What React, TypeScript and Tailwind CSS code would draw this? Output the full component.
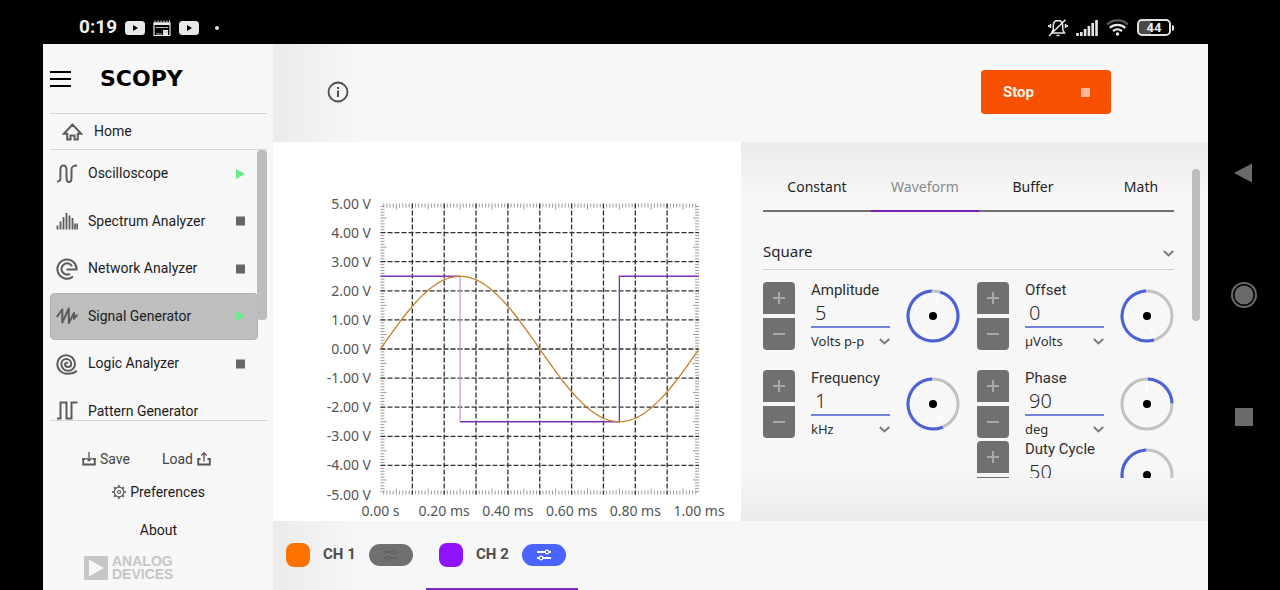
import React, { useState } from 'react';
import clsx from 'clsx';

type ToolState = 'running' | 'stopped' | 'none';

interface Tool {
  name: string;
  state: ToolState;
  icon: React.ReactNode;
}

const tools: Tool[] = [
  {
    name: 'Oscilloscope',
    state: 'running',
    icon: <path d="M1 18.500c3.200 0 3.400-1.200 3.400-4V7c0-3 .8-4.500 3-4.500S10.500 4 10.500 7v7.500c0 3 .8 4.500 2.500 4.500s2.500-1.500 2.500-4.500V7c0-3 1-4.500 5.500-4.500" />,
  },
  {
    name: 'Spectrum Analyzer',
    state: 'stopped',
    icon: <path d="M1.500 19.500v-4M4.500 19.500v-8M7.500 19.500V7M10.500 19.500V3M13.500 19.500V5.500M16.500 19.500V8M19 19.500v-6M21.300 19.500v-6" strokeWidth="1.800" />,
  },
  {
    name: 'Network Analyzer',
    state: 'stopped',
    icon: <path d="M17 18.600A9.600 9.600 0 1 1 20.600 11.500H10.500M14 15.800A5.600 5.600 0 1 1 16 8.200" />,
  },
  {
    name: 'Signal Generator',
    state: 'running',
    icon: <path d="M.8 12 6.300 4.500V17.500L12.800 3.500V18L18 8V14L21.300 9.500" strokeLinejoin="round" />,
  },
  {
    name: 'Logic Analyzer',
    state: 'stopped',
    icon: (
      <path d="M20.800 17.800C18.500 20 15 20.700 11 20.700A9.700 9.700 0 0 1 1.300 11 8.850 8.850 0 0 1 19 11 6.850 6.850 0 0 1 5.300 11 4.950 4.950 0 0 1 15.200 11 3.100 3.100 0 0 1 9 11 1.600 1.600 0 0 1 11.800 10.500" />
    ),
  },
  {
    name: 'Pattern Generator',
    state: 'none',
    icon: <path d="M1 18.500h3.500v-16h6V18.500h5v-16H21.500" />,
  },
];

interface Param {
  id: string;
  label: string;
  value: string;
  unit: string;
  // knob arc in degrees, clockwise from the top
  from: number;
  sweep: number;
  needle: number;
}

const amplitude: Param = { id: 'amplitude', label: 'Amplitude', value: '5', unit: 'Volts p-p', from: 17, sweep: 340, needle: 15 };
const offset: Param = { id: 'offset', label: 'Offset', value: '0', unit: 'µVolts', from: 164, sweep: 194, needle: 162 };
const frequency: Param = { id: 'frequency', label: 'Frequency', value: '1', unit: 'kHz', from: 157, sweep: 201, needle: 155 };
const phase: Param = { id: 'phase', label: 'Phase', value: '90', unit: 'deg', from: 2, sweep: 86, needle: 0 };
const dutyCycle: Param = { id: 'duty', label: 'Duty Cycle', value: '50', unit: '%', from: 180, sweep: 178, needle: 180 };

const YoutubeIcon: React.FC = () => (
  <svg className="h-[14px] w-5" viewBox="0 0 20 14">
    <rect width="20" height="14" rx="3.500" fill="#e8e8e8" />
    <path d="M8 4v6l5-3z" fill="#000" />
  </svg>
);

const StatusBar: React.FC = () => (
  <header className="flex h-11 shrink-0 items-center justify-between pt-[11px] pr-[34px] pl-9 text-[#f0f0f0]">
    <div className="flex items-center gap-2">
      <span className="w-[38px] text-[19px] font-bold">0:19</span>
      <YoutubeIcon />
      <svg className="h-4 w-[18px]" viewBox="0 0 18 16">
        <path d="M1 3h16v12.500H1z" fill="none" stroke="#e8e8e8" strokeWidth="1.200" />
        <path d="M1 2.500h16V5H1zM10 10h5v5h-5z" fill="#e8e8e8" />
        <path d="M3 7.500h12M3 14h6M10 12h5" stroke="#bbb" />
        <path d="M2 .5v2M5 .5v2M8 .5v2M11 .5v2M14 .5v2M16.500 .5v2" stroke="#e8e8e8" />
      </svg>
      <YoutubeIcon />
      <span className="ml-2 h-1 w-1 rounded-full bg-[#e0e0e0]" />
    </div>
    <div className="flex items-center gap-2">
      <svg className="h-[18px] w-5" viewBox="0 0 20 18" fill="none" stroke="#e8e8e8" strokeWidth="1.500">
        <path d="M10 1.500c-3.200 0-4.700 2-4.700 5v4L3.500 14h13l-1.800-3.500v-4c0-3-1.500-5-4.700-5zM8.500 16.500h3M17.500 .8 1 17M2.500 5v4M.8 6v2M17.500 5v4M19.200 6v2" />
      </svg>
      <svg className="h-4 w-[22px]" viewBox="0 0 22 16" stroke="#e8e8e8" strokeWidth="2.600">
        <path d="M1.500 16v-3M5.300 16v-4M9.100 16V9M12.900 16V6M16.700 16V3M20.500 16V0" />
      </svg>
      <svg className="h-[17px] w-[23px]" viewBox="0 0 23 17" fill="none" strokeWidth="2.200">
        <path d="M1 5.500c6-5.500 15-5.500 21 0" stroke="#5a5a5a" />
        <path d="M3.700 8.800c4.500-4 11-4 15.600 0M7 12.100c2.600-2.200 6.400-2.200 9 0" stroke="#e8e8e8" />
        <circle cx="11.500" cy="15" r="1.800" fill="#e8e8e8" />
      </svg>
      <div className="flex items-center gap-px">
        <span className="flex h-[17px] w-[34px] items-center justify-center rounded-[5px] border-2 border-[#e0e0e0] bg-linear-to-r from-[#4a4a4a] from-40% to-black to-40% text-[13px] font-bold">
          44
        </span>
        <span className="h-[6px] w-[2px] rounded-r bg-[#e0e0e0]" />
      </div>
    </div>
  </header>
);

const StateMark: React.FC<{ state: ToolState }> = ({ state }) => {
  if (state === 'none') return null;
  return (
    <svg className="h-[10px] w-[10px]" viewBox="0 0 10 10">
      {state === 'running' ? <path d="M0 0v10l9-5z" fill="#6bea8a" /> : <path d="M0 .5h9v9H0z" fill="#666" />}
    </svg>
  );
};

const Sidebar: React.FC = () => {
  const [active, setActive] = useState('Signal Generator');

  return (
    <aside className="flex w-[230px] shrink-0 flex-col bg-[#f7f7f7] pr-[6px] pl-[7px] text-[#1c1c1c]">
      <div className="flex h-[69px] shrink-0 items-center gap-[29px]">
        <button type="button" aria-label="Menu" className="flex w-[21px] flex-col gap-[5px]">
          <span className="h-[2px] bg-black" />
          <span className="h-[2px] bg-black" />
          <span className="h-[2px] bg-black" />
        </button>
        <h1 className="font-['DejaVu_Sans',sans-serif] text-[22px] font-bold text-black">SCOPY</h1>
      </div>

      <button type="button" className="flex h-9 shrink-0 items-center gap-[11px] border-t border-[#d4d4d4] pl-3 text-[14px]">
        <svg className="h-5 w-[21px]" viewBox="0 0 21 20" fill="none" stroke="#5c5c5c" strokeWidth="2">
          <path d="M10.500 2.500 1.800 11.800h3.400V17.500h3.300v-4h4v4h3.300v-5.700h3.400z" />
        </svg>
        Home
      </button>

      <nav className="relative min-h-0 flex-1 overflow-hidden border-y border-[#d4d4d4]">
        <div className="mr-[9px] grid h-[285px] grid-rows-6">
          {tools.map((tool) => (
            <button
              key={tool.name}
              type="button"
              onClick={() => setActive(tool.name)}
              className={clsx(
                'flex items-center rounded-[5px] pr-3 pl-[6px] text-left text-[14px]',
                active === tool.name && 'bg-[#bebebe] ring-1 ring-[#b0b0b0] ring-inset',
              )}
            >
              <svg className="mr-[10px] h-[22px] w-[22px]" viewBox="0 0 22 22" fill="none" stroke="#5c5c5c" strokeWidth="2">
                {tool.icon}
              </svg>
              <span className="flex-1">{tool.name}</span>
              <StateMark state={tool.state} />
            </button>
          ))}
        </div>
        <div className="absolute top-0 right-0 h-[170px] w-[10px] rounded bg-[#bdbdbd]" />
      </nav>

      <div className="flex h-[169px] shrink-0 flex-col pt-[28px] text-[14px] leading-5">
        <div className="flex gap-8 pl-8 text-[#444]">
          <button type="button" className="flex items-center gap-1">
            <svg className="h-[14px] w-[14px]" viewBox="0 0 14 14" fill="none" stroke="#555">
              <path d="M3.500 7H1.200v5.500h11.600V7h-2.300" strokeWidth="1.800" />
              <path d="M7 0v8.500M4.300 6 7 8.800 9.700 6" strokeWidth="1.300" />
            </svg>
            Save
          </button>
          <button type="button" className="flex items-center gap-1">
            Load
            <svg className="h-[14px] w-[14px]" viewBox="0 0 14 14" fill="none" stroke="#555">
              <path d="M3.500 7H1.200v5.500h11.600V7h-2.300" strokeWidth="1.800" />
              <path d="M7 9.500V1M4.300 3.500 7 .8l2.700 2.700" strokeWidth="1.300" />
            </svg>
          </button>
        </div>
        <button type="button" className="mt-[13px] flex items-center justify-center gap-1">
          <svg className="h-[14px] w-[14px]" viewBox="0 0 14 14" fill="none" stroke="#555">
            <circle cx="7" cy="7" r="4.800" strokeWidth="1.200" />
            <circle cx="7" cy="7" r="1.500" strokeWidth="1.200" />
            <circle cx="7" cy="7" r="6.100" strokeWidth="1.600" pathLength="80" strokeDasharray="4 6" strokeDashoffset="2" />
          </svg>
          Preferences
        </button>
        <button type="button" className="mt-[18px]">About</button>
        <div className="mt-[15px] flex items-center gap-1 pl-[34px]">
          <svg className="h-6 w-6" viewBox="0 0 24 24">
            <path d="M0 0h24v24H0zM5 3.500v17L20 12z" fill="#c6c6c6" fillRule="evenodd" />
          </svg>
          <p className="font-['Liberation_Sans',sans-serif] text-[14px] leading-[13px] font-bold text-[#c6c6c6]">
            ANALOG
            <br />
            DEVICES
          </p>
        </div>
      </div>
    </aside>
  );
};

const LEFT = 107.5;
const TOP = 61.5;
const PLOT_W = 318.5;
const PLOT_H = 291;

const px = (ms: number) => LEFT + ms * PLOT_W;
const py = (volts: number) => TOP + PLOT_H / 2 - (volts * PLOT_H) / 10;

const range = (n: number) => Array.from({ length: n }, (_, i) => i);

const sine = range(161)
  .map((i) => `${px(i / 160).toFixed(1)},${py(2.5 * Math.sin((i / 80) * Math.PI)).toFixed(1)}`)
  .join(' ');

const Plot: React.FC = () => (
  <section className="min-w-0 flex-1 bg-white">
    <svg className="h-full w-full font-['Noto_Sans',sans-serif] text-[14px]" viewBox="0 0 468 379" fill="none">
      <g stroke="#9a9a9a">
        {range(99).map((n) => {
          const i = n + 1;
          const len = i % 10 === 5 ? 6 : 4;
          const x = px(i / 100);
          const y = py(5 - i / 10);
          return (
            <path
              key={i}
              d={`M${x} ${TOP}v${len}M${x} ${TOP + PLOT_H}v${-len}M${LEFT} ${y}h${len}M${LEFT + PLOT_W} ${y}h${-len}`}
            />
          );
        })}
      </g>
      <g stroke="#303030" strokeWidth="1.300" strokeDasharray="5 2">
        {range(9).map((i) => (
          <path key={i} d={`M${px((i + 1) / 10)} ${TOP}v${PLOT_H}M${LEFT} ${py(4 - i)}h${PLOT_W}`} />
        ))}
      </g>
      <path d={`M${px(0.25)} ${py(2.5)}V${py(-2.5)}`} stroke="#bfa0d6" strokeWidth="1.300" />
      <path
        d={`M${px(0)} ${py(2.5)}H${px(0.25)}M${px(0.25)} ${py(-2.5)}H${px(0.75)}V${py(2.5)}H${px(1)}`}
        stroke="#8132b4"
        strokeWidth="1.300"
      />
      <polyline points={sine} stroke="#c5822f" strokeWidth="1.300" />
      <g fill="#555">
        {range(11).map((i) => (
          <text key={i} x="98" y={py(5 - i) + 5} textAnchor="end">
            {(5 - i).toFixed(2)} V
          </text>
        ))}
        {range(6).map((i) => (
          <text key={i} x={px(i / 5)} y="374" textAnchor="middle">
            {(i / 5).toFixed(2)} {i === 0 ? 's' : 'ms'}
          </text>
        ))}
      </g>
    </svg>
  </section>
);

const Chevron: React.FC = () => (
  <svg className="pointer-events-none h-[7px] w-[11px] shrink-0" viewBox="0 0 11 7" fill="none" stroke="#777" strokeWidth="1.800">
    <path d="M.8 1 5.500 5.500 10.200 1" />
  </svg>
);

const Knob: React.FC<{ param: Param }> = ({ param }) => (
  <svg className="h-[54px] w-[54px] shrink-0" viewBox="-27 -27 54 54" fill="none">
    <circle r="25" stroke="#c2c2c2" strokeWidth="3" />
    <circle
      r="25"
      stroke="#4a62d8"
      strokeWidth="3"
      pathLength="360"
      strokeDasharray={`${param.sweep} 360`}
      transform={`rotate(${param.from - 90})`}
    />
    <path d="M0-12v-6" stroke="#fff" strokeWidth="2" transform={`rotate(${param.needle})`} />
    <circle r="4" fill="#000" />
  </svg>
);

const SpinBox: React.FC<{ param: Param }> = ({ param }) => {
  const [value, setValue] = useState(param.value);
  const step = (by: number) => setValue(String(Number(value) + by));

  return (
    <div className="flex h-[68px] items-center">
      <div className="flex flex-col gap-1">
        <button
          type="button"
          aria-label={`Increase ${param.label}`}
          onClick={() => step(1)}
          className="flex h-8 w-8 items-center justify-center rounded-t bg-[#707070]"
        >
          <svg className="h-3 w-3" viewBox="0 0 12 12" stroke="#a8a8a8" strokeWidth="2">
            <path d="M6 0v12M0 6h12" />
          </svg>
        </button>
        <button
          type="button"
          aria-label={`Decrease ${param.label}`}
          onClick={() => step(-1)}
          className="flex h-8 w-8 items-center justify-center rounded-b bg-[#707070]"
        >
          <svg className="h-3 w-3" viewBox="0 0 12 12" stroke="#a8a8a8" strokeWidth="2">
            <path d="M0 6h12" />
          </svg>
        </button>
      </div>
      <div className="mr-4 ml-4 flex w-[79px] flex-col self-start text-[#2e2e2e]">
        <label htmlFor={param.id} className="text-[15px] leading-4 whitespace-nowrap">
          {param.label}
        </label>
        <input
          id={param.id}
          value={value}
          onChange={(e) => setValue(e.target.value)}
          className="h-[30px] w-full border-b-2 border-[#7083d8] bg-transparent px-1 pt-[2px] font-['Noto_Sans',sans-serif] text-[20px] font-light outline-none"
        />
        <div className="relative flex h-[26px] items-center">
          <select
            aria-label={`${param.label} unit`}
            className="w-full appearance-none bg-transparent font-['Noto_Sans',sans-serif] text-[13px] leading-5 outline-none"
          >
            <option>{param.unit}</option>
          </select>
          <span className="pointer-events-none absolute right-0">
            <Chevron />
          </span>
        </div>
      </div>
      <Knob param={param} />
    </div>
  );
};

const tabs = ['Constant', 'Waveform', 'Buffer', 'Math'];

const SettingsPanel: React.FC = () => {
  const [tab, setTab] = useState('Waveform');

  return (
    <section className="flex w-[467px] shrink-0 justify-between bg-[linear-gradient(#ebebeb,#f7f7f7_15%,#f7f7f7_86%,#ebebeb)] pt-[27px] pr-2 pb-[43px] pl-[22px] font-['Noto_Sans',sans-serif]">
      <div className="flex min-h-0 w-[411px] flex-col overflow-hidden">
        <div role="tablist" className="flex shrink-0 overflow-hidden">
          {tabs.map((name) => (
            <button
              key={name}
              type="button"
              role="tab"
              aria-selected={tab === name}
              onClick={() => setTab(name)}
              className={clsx(
                'h-[43px] w-[108px] shrink-0 border-b-2 pb-[6px] text-[14px]',
                tab === name ? 'border-[#7a1fb8] text-[#8a8a8a]' : 'border-[#707070] text-[#1f1f1f]',
              )}
            >
              {name}
            </button>
          ))}
        </div>

        <div className="relative mt-[22px] mb-3 flex h-9 shrink-0 items-center border-b border-[#cfcfcf]">
          <select
            aria-label="Waveform type"
            className="w-full appearance-none bg-transparent text-[15px] text-[#1f1f1f] outline-none"
          >
            <option>Square</option>
          </select>
          <span className="pointer-events-none absolute top-4 right-0">
            <Chevron />
          </span>
        </div>

        <div className="flex justify-between font-[Roboto,sans-serif]">
          <div className="flex flex-col gap-5">
            <SpinBox param={amplitude} />
            <SpinBox param={frequency} />
          </div>
          <div className="flex flex-col gap-5">
            <SpinBox param={offset} />
            <div className="flex flex-col gap-[3px]">
              <SpinBox param={phase} />
              <SpinBox param={dutyCycle} />
            </div>
          </div>
        </div>
      </div>
      <div className="h-[152px] w-2 rounded bg-[#bdbdbd]" />
    </section>
  );
};

const SlidersIcon: React.FC<{ className: string }> = ({ className }) => (
  <svg className={clsx('h-3 w-[14px]', className)} viewBox="0 0 14 12" fill="none" stroke="currentColor" strokeWidth="1.800">
    <path d="M0 3h8M12 3h2M0 9h2M6 9h8" />
    <circle cx="10" cy="3" r="1.800" strokeWidth="1.200" />
    <circle cx="4" cy="9" r="1.800" strokeWidth="1.200" />
  </svg>
);

const ChannelBar: React.FC = () => (
  <footer className="flex h-[69px] shrink-0 bg-linear-to-r from-[#ebebeb] to-[#f7f7f7] to-[90px] text-[15px] font-bold text-[#4d4d4d]">
    <div className="flex w-[153px] items-center border-b-2 border-transparent pl-[13px]">
      <span className="h-6 w-6 rounded-lg bg-[#ff7200]" />
      <span className="w-[59px] pl-[13px]">CH 1</span>
      <button type="button" aria-label="CH 1 settings" className="flex h-[22px] w-11 items-center justify-center rounded-full bg-[#707070]">
        <SlidersIcon className="text-[#626262]" />
      </button>
    </div>
    <div className="flex w-[152px] items-center border-b-2 border-[#7a2bc4] pl-[13px]">
      <span className="h-6 w-6 rounded-lg bg-[#9013fe]" />
      <span className="w-[59px] pl-[13px]">CH 2</span>
      <button type="button" aria-label="CH 2 settings" className="flex h-[22px] w-11 items-center justify-center rounded-full bg-[#4a64ff]">
        <SlidersIcon className="text-white" />
      </button>
    </div>
  </footer>
);

const App: React.FC = () => (
  <div className="flex h-screen bg-black pl-[43px] font-[Roboto,sans-serif]">
    <div className="flex min-w-0 flex-1 flex-col">
      <StatusBar />
      <main className="flex min-h-0 flex-1">
        <Sidebar />
        <div className="flex min-w-0 flex-1 flex-col">
          <div className="flex h-[98px] shrink-0 items-center justify-between bg-linear-to-r from-[#ebebeb] to-[#f7f7f7] to-[90px] pr-[97px] pb-[2px] pl-[54px]">
            <button type="button" aria-label="Info">
              <svg className="h-[22px] w-[22px]" viewBox="0 0 22 22" fill="none" stroke="#4d4d4d" strokeWidth="2">
                <circle cx="11" cy="11" r="9.500" strokeWidth="1.800" />
                <path d="M11 9.500v6.500M11 6v2" />
              </svg>
            </button>
            <button
              type="button"
              className="flex h-11 w-[130px] items-center justify-between rounded bg-[#f75000] pr-[21px] pl-[22px] text-[15px] font-bold text-[#fff3ea]"
            >
              Stop
              <span className="h-[9px] w-[9px] bg-[#ffb898]" />
            </button>
          </div>
          <div className="flex min-h-0 flex-1">
            <Plot />
            <SettingsPanel />
          </div>
          <ChannelBar />
        </div>
      </main>
    </div>

    <nav className="flex w-[72px] shrink-0 flex-col items-center justify-center gap-24">
      <button type="button" aria-label="Back">
        <svg className="h-[26px] w-[26px]" viewBox="0 0 26 26">
          <path d="M21 3.500v19L3 13z" fill="#6a6a6a" />
        </svg>
      </button>
      <button type="button" aria-label="Home screen">
        <svg className="h-[26px] w-[26px]" viewBox="0 0 26 26">
          <circle cx="13" cy="13" r="12" fill="none" stroke="#6a6a6a" strokeWidth="2" />
          <circle cx="13" cy="13" r="9.500" fill="#6a6a6a" />
        </svg>
      </button>
      <button type="button" aria-label="Recent apps">
        <svg className="h-[26px] w-[26px]" viewBox="0 0 26 26">
          <path d="M4 4h18v18H4z" fill="#6a6a6a" />
        </svg>
      </button>
    </nav>
  </div>
);

export default App;
